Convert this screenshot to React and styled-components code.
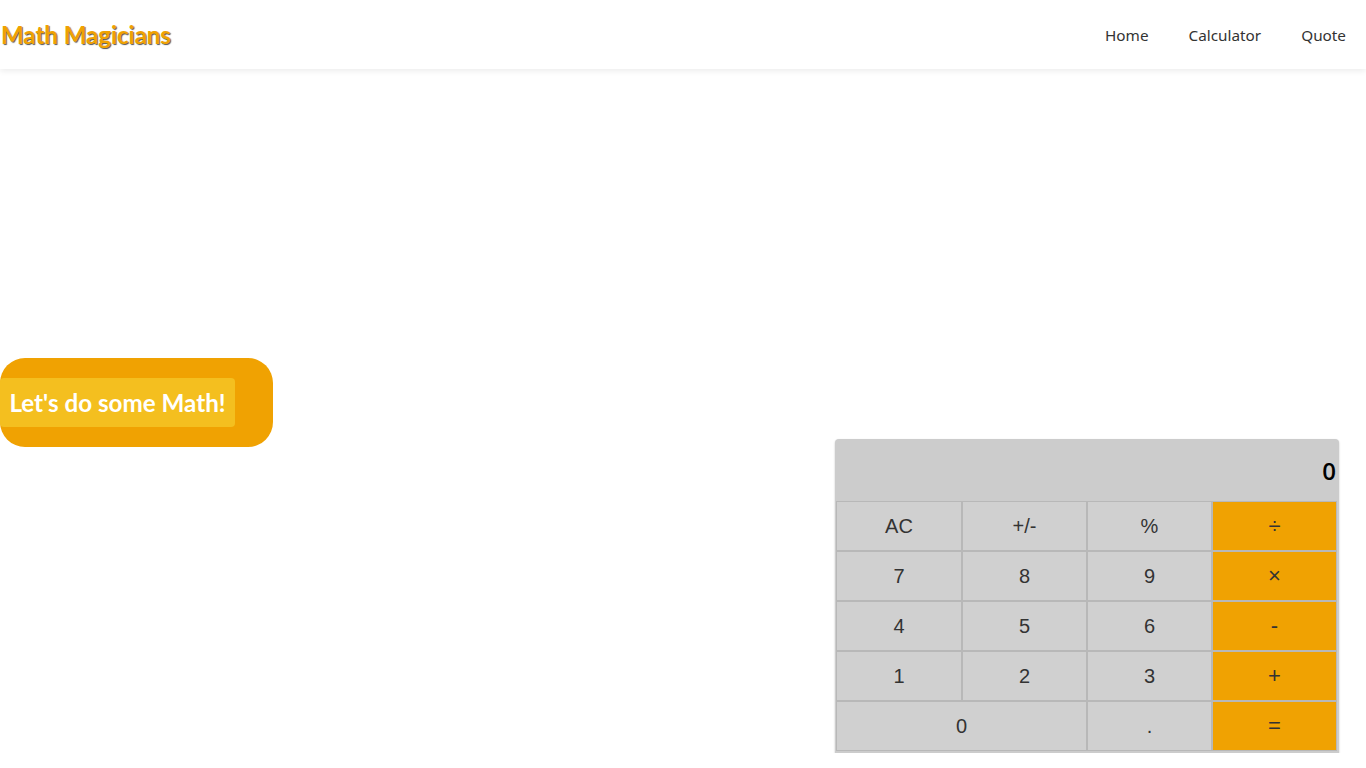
import React from 'react';
import styled, { createGlobalStyle } from 'styled-components';

const Global = createGlobalStyle`
  html, body { margin: 0; padding: 0; background: #fff; }
  body { font-family: "Noto Sans", sans-serif; }
  * { box-sizing: border-box; }
`;

const Header = styled.header`
  height: 69px;
  display: flex;
  align-items: center;
  justify-content: space-between;
  padding: 0 20px 0 1px;
  background: #fff;
  box-shadow: 0 2px 6px rgba(0, 0, 0, 0.08);
  position: relative;
  z-index: 1;
`;

const Logo = styled.h1`
  margin: 0;
  font-family: "Lato", sans-serif;
  font-weight: 700;
  font-size: 24px;
  color: #f0a202;
  text-shadow: 1px 1px 1px #555;
`;

const Nav = styled.nav`
  display: flex;
  gap: 40px;
`;

const NavLink = styled.a`
  font-family: "Noto Sans", sans-serif;
  font-size: 15.3px;
  color: #333;
  text-decoration: none;
`;

const Main = styled.main`
  display: flex;
  justify-content: space-between;
  align-items: flex-start;
`;

const HeroBox = styled.div`
  margin-top: 289px;
  width: 273px;
  height: 89px;
  background: #f0a202;
  border-radius: 25px;
  padding-top: 20px;
`;

const HeroButton = styled.button`
  display: block;
  width: 235px;
  height: 49px;
  border: none;
  border-radius: 4px;
  background: #f4bf1f;
  color: #fff;
  font-family: "Lato", sans-serif;
  font-weight: 700;
  font-size: 24.2px;
  padding: 0;
  text-align: center;
`;

const Calculator = styled.div`
  margin-top: 370px;
  margin-right: 27px;
  width: 504px;
  background: #cccccc;
  border-radius: 4px 4px 0 0;
  box-shadow: 0 1px 2px rgba(0, 0, 0, 0.25);
  padding: 0 1px 2px 1px;
`;

const Display = styled.div`
  height: 62px;
  display: flex;
  align-items: center;
  justify-content: flex-end;
  padding: 0 2px 0 0;
  font-family: "Open Sans", sans-serif;
  font-weight: 600;
  font-size: 24px;
  color: #000;
`;

const Keys = styled.div`
  display: grid;
  grid-template-columns: 126px 125px 125px 125px;
  grid-auto-rows: 50px;
`;

const Key = styled.button`
  grid-column: span ${(p) => p.$span || 1};
  border: 1px solid #b8b8b8;
  background: ${(p) => (p.$op ? '#f0a202' : '#d0d0d0')};
  color: #333;
  font-family: "Liberation Sans", Arial, sans-serif;
  font-size: ${(p) => (p.$op ? '22px' : '20px')};
  padding: 0;
  margin: 0;
`;

const keys = [
  ['AC'], ['+/-'], ['%'], ['÷', true],
  ['7'], ['8'], ['9'], ['×', true],
  ['4'], ['5'], ['6'], ['-', true],
  ['1'], ['2'], ['3'], ['+', true],
  ['0', false, 2], ['.'], ['=', true],
];

export default function App() {
  return (
    <>
      <Global />
      <Header>
        <Logo>Math Magicians</Logo>
        <Nav>
          <NavLink href="#">Home</NavLink>
          <NavLink href="#">Calculator</NavLink>
          <NavLink href="#">Quote</NavLink>
        </Nav>
      </Header>
      <Main>
        <HeroBox>
          <HeroButton>Let's do some Math!</HeroButton>
        </HeroBox>
        <Calculator>
          <Display>0</Display>
          <Keys>
            {keys.map(([label, op, span]) => (
              <Key key={label} $op={op} $span={span}>{label}</Key>
            ))}
          </Keys>
        </Calculator>
      </Main>
    </>
  );
}
